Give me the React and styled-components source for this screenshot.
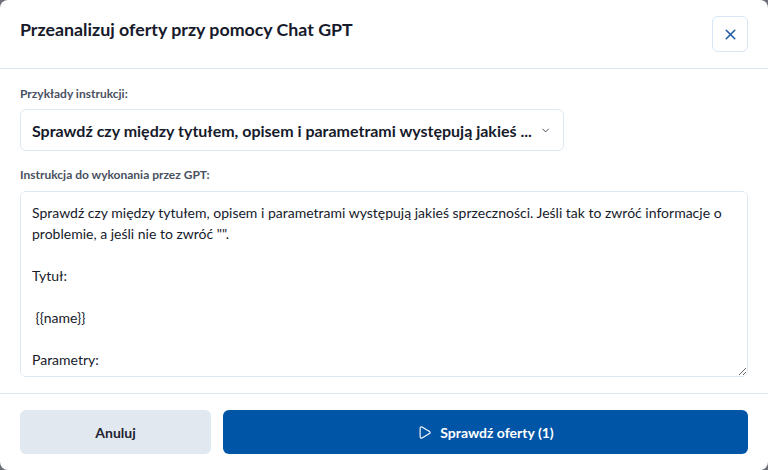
import React from "react";
import styled, { createGlobalStyle } from "styled-components";
import { X, Play, ChevronDown } from "lucide-react";

const Global = createGlobalStyle`
  html, body { margin: 0; padding: 0; background: #6d7079; }
  body { font-family: Lato, "Noto Sans", sans-serif; }
  * { box-sizing: border-box; }
`;

const Dialog = styled.div`
  width: 768px;
  height: 470px;
  background: #fff;
  border-radius: 8px;
  display: flex;
  flex-direction: column;
  overflow: hidden;
`;

const Header = styled.header`
  height: 69px;
  display: flex;
  align-items: flex-start;
  justify-content: space-between;
  padding: 16px 20px 0 20px;
  border-bottom: 1px solid #dae8f4;
`;

const Title = styled.h2`
  margin: 2px 0 0;
  font-size: 17.8px;
  font-weight: 700;
  color: #161a2b;
`;

const CloseButton = styled.button`
  width: 36px;
  height: 36px;
  border: 1px solid #d6e6f5;
  border-radius: 6px;
  background: #fff;
  color: #1f5aa6;
  display: flex;
  align-items: center;
  justify-content: center;
  padding: 0;
  cursor: pointer;
`;

const Body = styled.div`
  flex: 1;
  display: flex;
  flex-direction: column;
  padding: 17px 20px 16px;
  border-bottom: 1px solid #dde6ee;
`;

const Label = styled.label`
  font-size: 12px;
  font-weight: 700;
  color: #4a5161;
  margin-bottom: ${p => p.$mb || 9}px;
  display: block;
`;

const Select = styled.div`
  width: 544px;
  height: 42px;
  border: 1px solid #dde8f2;
  border-radius: 6px;
  display: flex;
  align-items: center;
  padding: 0 12px 0 11px;
  gap: 8px;
  margin-bottom: 16px;
  color: #161a2b;
`;

const SelectText = styled.span`
  flex: 1;
  font-size: 16px;
  font-weight: 700;
  white-space: nowrap;
`;

const TextArea = styled.textarea`
  width: 728px;
  height: 186px;
  border: 1px solid #dde8f2;
  border-radius: 6px;
  padding: 10px 11px;
  font-family: Lato, "Noto Sans", sans-serif;
  font-size: 14px;
  line-height: 21px;
  color: #161a2b;
  resize: vertical;
  overflow: auto;
  scrollbar-width: none;
  outline: none;
  margin: 0;
  display: block;
`;

const Footer = styled.footer`
  display: flex;
  gap: 12px;
  padding: 16px 20px;
`;

const Button = styled.button`
  height: 44px;
  border: none;
  border-radius: 6px;
  font-family: Lato, "Noto Sans", sans-serif;
  font-size: 14px;
  font-weight: 700;
  display: flex;
  align-items: center;
  justify-content: center;
  gap: 8px;
  cursor: pointer;
  width: ${p => (p.$primary ? "auto" : "191px")};
  flex: ${p => (p.$primary ? "1" : "none")};
  background: ${p => (p.$primary ? "#0055a6" : "#e2e8f0")};
  color: ${p => (p.$primary ? "#ffffff" : "#1f2433")};
`;

const text = `Sprawdź czy między tytułem, opisem i parametrami występują jakieś sprzeczności. Jeśli tak to zwróć informacje o problemie, a jeśli nie to zwróć "".

Tytuł:

 {{name}}

Parametry:

 {{parameters}}

Opis:

 {{description}}`;

export default function App() {
  return (
    <>
      <Global />
      <Dialog>
        <Header>
          <Title>Przeanalizuj oferty przy pomocy Chat GPT</Title>
          <CloseButton aria-label="Zamknij">
            <X size={17} strokeWidth={2.2} />
          </CloseButton>
        </Header>
        <Body>
          <Label $mb={8}>Przykłady instrukcji:</Label>
          <Select>
            <SelectText>Sprawdź czy między tytułem, opisem i parametrami występują jakieś ...</SelectText>
            <ChevronDown size={13} strokeWidth={2} color="#3a4150" />
          </Select>
          <Label>Instrukcja do wykonania przez GPT:</Label>
          <TextArea defaultValue={text} />
        </Body>
        <Footer>
          <Button>Anuluj</Button>
          <Button $primary>
            <Play size={15} strokeWidth={1.8} />
            Sprawdź oferty (1)
          </Button>
        </Footer>
      </Dialog>
    </>
  );
}
